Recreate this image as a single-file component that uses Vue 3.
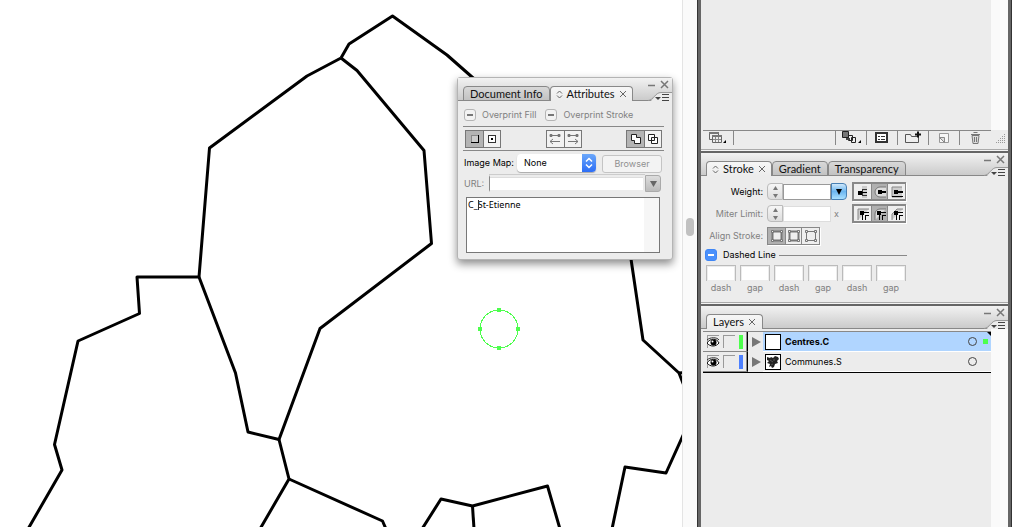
<script setup>
import { ref } from 'vue'

const borders = [
  '480,84 472,77 447,55 392.500,16 349,44 341,58',
  '341,58 307,76 209.500,148 199,277 137,277 139.500,313.500 78,341 54.500,444.500 62,470 28,529',
  '341,58 357,70.500 424,150.500 431.500,243.500 320,328.500 279,439.500 248,432 235.500,373 199,277',
  '279,439.500 289,479 260,529',
  '289,479 382.500,521 386,529',
  '628,238 631,259 643,340 679,373 686,391',
  '679,373 690,372',
  '690,420 666,473 625,467 612,529',
  '422,529 441,499 472.500,506 547.500,486 560,529',
  '472.500,506 474,529',
]
const note = ref('C_St-Etienne')
const imageMap = ref('None')
const dashes = ['dash', 'gap', 'dash', 'gap', 'dash', 'gap']
const layers = [
  { name: 'Centres.C', tone: 'green', selected: true },
  { name: 'Communes.S', tone: 'blue', selected: false },
]
</script>

<template>
  <div class="app">
    <main class="canvas">
      <svg class="map" width="100%" height="100%">
        <polyline v-for="b in borders" :key="b" :points="b" fill="none" stroke="#000" stroke-width="3" stroke-linejoin="round" />
        <g fill="#4dff4d" shape-rendering="crispEdges">
          <circle cx="499" cy="329" r="19" fill="none" stroke="#4dff4d" />
          <rect x="497" y="308" width="4" height="4" />
          <rect x="497" y="346" width="4" height="4" />
          <rect x="478" y="327" width="4" height="4" />
          <rect x="516" y="327" width="4" height="4" />
        </g>
      </svg>

      <section class="palette" aria-label="Attributes">
        <header class="head">
          <div class="tabs">
            <button class="tab off">Document Info</button>
            <button class="tab">
              <svg class="ud" width="7" height="9"><path d="M1 3.500 3.500 1 6 3.500M1 5.500 3.500 8 6 5.500" /></svg>Attributes
              <svg class="tx" width="8" height="8"><path d="M1 1l6 6M7 1l-6 6" /></svg>
            </button>
          </div>
          <svg class="corner" width="24" height="24">
            <path d="M0 24C6 23 7 15 13 15H24V24Z" fill="#ececec" /><path d="M0 22.500C6 22 7 14.500 13 14.500H24" fill="none" stroke="#999" />
            <path d="M0 7.500h7M13 3l7 7M20 3l-7 7" fill="none" stroke="#777" stroke-width="1.500" />
            <path d="M7 19h6l-3 3z" fill="#444" /><path d="M14 16.500h7M14 19.500h7M14 22.500h7" stroke="#444" />
          </svg>
        </header>
        <div class="attrs">
          <div class="over">
            <label><input type="checkbox" class="mixed" />Overprint Fill</label>
            <label><input type="checkbox" class="mixed" />Overprint Stroke</label>
          </div>
          <div class="trio">
            <div class="pair">
              <button class="on" aria-label="Hide center"><svg width="16" height="16"><path d="M4 4h8v8H4z" fill="#888" /><path d="M5 5h6v6H5z" fill="#ccc" /><path d="M11 4h1v8H4v-1h7z" /></svg></button>
              <button aria-label="Show center"><svg width="16" height="16"><rect x="4.500" y="4.500" width="7" height="7" fill="#fff" stroke="#333" /><rect x="7" y="7" width="2" height="2" /></svg></button>
            </div>
            <div class="pair">
              <button aria-label="Reverse path off"><svg width="16" height="16" fill="none" stroke="#777"><path d="M3 4.500h10M3 3.500h2v2H3zM11 3.500h2v2h-2zM3 10.500h10M6 8l-3 2.500L6 13" /></svg></button>
              <button aria-label="Reverse path on"><svg width="16" height="16" fill="none" stroke="#777"><path d="M3 4.500h10M3 3.500h2v2H3zM11 3.500h2v2h-2zM3 10.500h10M10 8l3 2.500L10 13" /></svg></button>
            </div>
            <div class="pair">
              <button class="on" aria-label="Non-zero winding"><svg width="16" height="16"><path d="M3.500 3.500h5v3h4v6h-6v-3h-3z" fill="#fff" stroke="#222" /></svg></button>
              <button aria-label="Even-odd"><svg width="16" height="16"><path d="M3.500 3.500h6v6h-6zM6.500 6.500h6v6h-6z" fill="#fff" fill-rule="evenodd" stroke="#222" /></svg></button>
            </div>
          </div>
          <div class="line imap">
            <label for="imap">Image Map:</label>
            <div class="pick">
              <select id="imap" v-model="imageMap"><option>None</option></select>
              <svg width="14" height="18"><path d="M4 7.500 7 4.500l3 3M4 10.500l3 3 3-3" fill="none" stroke="#fff" stroke-width="1.500" /></svg>
            </div>
            <button class="browser" disabled>Browser</button>
          </div>
          <div class="line url">
            <label for="url">URL:</label>
            <input id="url" type="text" disabled />
            <button aria-label="Recent URLs" disabled><svg width="7" height="6"><path d="M0 0h7L3.500 6z" fill="#666" /></svg></button>
          </div>
          <div class="note"><textarea v-model="note" aria-label="Note" spellcheck="false"></textarea><i class="caret"></i></div>
        </div>
      </section>
    </main>

    <div class="vscroll"><i></i></div>

    <aside class="dock">
      <section class="panel swatches">
        <div class="blank"><div class="track"></div></div>
        <footer class="tools">
          <button aria-label="Libraries"><svg width="22" height="16"><g fill="#eee" stroke="#666"><path d="M2.500 2.500h9v7h-9z" /><path d="M5.500 5.500h9v7h-9z" /></g><path d="M2 2h10v2H2zM5 5h10v2H5z" fill="#777" /><path d="M6 9.500h8M8.500 7v5M11.500 7v5" stroke="#888" /><path d="M19 10v3h-3z" /></svg></button>
          <span class="space"></span>
          <button aria-label="Show kinds"><svg width="22" height="16"><path d="M8.500 5.500h4v5h-4zM11.500 7.500h4v5h-4z" fill="#eee" stroke="#222" /><path d="M2.500 1.500h6v6h-6z" fill="#777" stroke="#222" /><path d="M6 8h4v2H6z" fill="#444" /><path d="M21 10v3h-3z" /></svg></button>
          <button aria-label="Options"><svg width="22" height="16"><rect x="5" y="3" width="11" height="9" fill="#fff" stroke="#333" stroke-width="2" /><path d="M7 6.500h2M10 6.500h4M7 9.500h2M10 9.500h4" stroke="#333" /></svg></button>
          <button aria-label="New group"><svg width="22" height="16"><path d="M3.500 12.500v-8h5l1 2h7v6z" fill="#eee" stroke="#555" /><path d="M13 4.500h6M16 1.500v6" stroke="#111" stroke-width="2" /></svg></button>
          <button aria-label="New"><svg width="22" height="16"><path d="M6.500 3.500h9v9h-9z" fill="#f6f6f6" stroke="#999" /><path d="M6.500 7.500h5v5z" fill="#ddd" stroke="#888" /></svg></button>
          <button aria-label="Delete"><svg width="22" height="16"><path d="M7 5.500l1 8h5l1-8z" fill="#ddd" stroke="#777" /><path d="M6 4.500h9M8.500 2.500h4M9.500 7v5M11.500 7v5" stroke="#777" /></svg></button>
          <svg class="grip" width="17" height="17" fill="#999"><path d="M13 4h1v1h-1zM11 6h1v1h-1zM13 6h1v1h-1zM9 8h1v1H9zM11 8h1v1h-1zM13 8h1v1h-1zM7 10h1v1H7zM9 10h1v1H9zM11 10h1v1h-1zM13 10h1v1h-1zM5 12h1v1H5zM7 12h1v1H7zM9 12h1v1H9zM11 12h1v1h-1zM13 12h1v1h-1z" /></svg>
        </footer>
      </section>

      <section class="panel">
        <header class="head">
          <div class="tabs">
            <button class="tab">
              <svg class="ud" width="7" height="9"><path d="M1 3.500 3.500 1 6 3.500M1 5.500 3.500 8 6 5.500" /></svg>Stroke
              <svg class="tx" width="8" height="8"><path d="M1 1l6 6M7 1l-6 6" /></svg>
            </button>
            <button class="tab off">Gradient</button>
            <button class="tab off">Transparency</button>
          </div>
          <svg class="corner" width="24" height="24">
            <path d="M0 24C6 23 7 15 13 15H24V24Z" fill="#ececec" /><path d="M0 22.500C6 22 7 14.500 13 14.500H24" fill="none" stroke="#999" />
            <path d="M0 7.500h7M13 3l7 7M20 3l-7 7" fill="none" stroke="#777" stroke-width="1.500" />
            <path d="M7 19h6l-3 3z" fill="#444" /><path d="M14 16.500h7M14 19.500h7M14 22.500h7" stroke="#444" />
          </svg>
        </header>
        <div class="stroke">
          <div class="srow">
            <label for="weight" class="strong">Weight:</label>
            <div class="spin live">
              <button class="step" aria-label="Step weight"><svg width="9" height="14"><path d="M2 5l2.500-4L7 5zM2 9l2.500 4L7 9z" fill="#777" /></svg></button>
              <input id="weight" type="text" />
              <button class="drop" aria-label="Weights"><svg width="6" height="6"><path d="M0 0h6L3 6z" /></svg></button>
            </div>
            <div class="seg">
              <button aria-label="Butt cap"><svg width="16" height="16"><path d="M7 2h5v12H7z" fill="#ccc" /><path d="M7 5h5v1H8v5h4v1H7z" fill="#333" /><path d="M3 7h4v4H3zM6 8h6v1H6z" /></svg></button>
              <button class="on" aria-label="Round cap"><svg width="16" height="16"><path d="M14 3H8a5 5 0 0 0 0 10h6" fill="#ddd" stroke="#777" /><path d="M6 6h4v4H6zM9 7h5v2H9z" /></svg></button>
              <button aria-label="Square cap"><svg width="16" height="16"><path d="M13 3H3v10h10" fill="#ccc" stroke="#888" /><path d="M5 6h4v4H5zM8 7h6v2H8zM3 12h11v1H3z" /></svg></button>
            </div>
          </div>
          <div class="srow">
            <label for="miter">Miter Limit:</label>
            <div class="spin">
              <button class="step" aria-label="Step miter limit" disabled><svg width="9" height="14"><path d="M2 5l2.500-4L7 5zM2 9l2.500 4L7 9z" fill="#777" /></svg></button>
              <input id="miter" type="text" disabled /><span>x</span>
            </div>
            <div class="seg">
              <button aria-label="Miter join"><svg width="16" height="16"><path d="M3 14V3h11" fill="#ccc" stroke="#888" /><path d="M5 5h4v4H5zM8 6h6v1H8zM7 8h1v6H7zM10 9h4v1h-3v4h-1z" /></svg></button>
              <button class="on" aria-label="Round join"><svg width="16" height="16"><path d="M3 14V8a5 5 0 0 1 5-5h6" fill="#ddd" stroke="#777" /><path d="M5 5h4v4H5zM8 6h6v1H8zM7 8h1v6H7zM10 9h4v1h-3v4h-1z" /></svg></button>
              <button aria-label="Bevel join"><svg width="16" height="16"><path d="M3 14V8l5-5h6" fill="#ccc" stroke="#888" /><path d="M5 5h4v4H5zM8 6h6v1H8zM7 8h1v6H7zM10 9h4v1h-3v4h-1z" /></svg></button>
            </div>
          </div>
          <div class="srow">
            <span class="lab">Align Stroke:</span>
            <div class="seg flat">
              <button v-for="(a, i) in ['center', 'inside', 'outside']" :key="a" :class="{ on: i === 0 }" :aria-label="'Align ' + a" disabled>
                <svg width="16" height="16" fill="#eee" stroke="#777"><path d="M3.500 3.500h9v9h-9z" :stroke-width="i < 2 ? 2 : 1" /><path d="M2.500 2.500h2v2h-2zM11.500 2.500h2v2h-2zM2.500 11.500h2v2h-2zM11.500 11.500h2v2h-2z" /></svg>
              </button>
            </div>
          </div>
          <div class="dashline"><label><input type="checkbox" class="mixed blue" />Dashed Line</label><hr /></div>
          <div class="dashes">
            <label v-for="(d, i) in dashes" :key="i"><input type="text" disabled />{{ d }}</label>
          </div>
        </div>
      </section>

      <section class="panel layers">
        <header class="head">
          <div class="tabs">
            <button class="tab off-mark">Layers
              <svg class="tx" width="8" height="8"><path d="M1 1l6 6M7 1l-6 6" /></svg>
            </button>
          </div>
          <svg class="corner" width="24" height="24">
            <path d="M0 24C6 23 7 15 13 15H24V24Z" fill="#ececec" /><path d="M0 22.500C6 22 7 14.500 13 14.500H24" fill="none" stroke="#999" />
            <path d="M0 7.500h7M13 3l7 7M20 3l-7 7" fill="none" stroke="#777" stroke-width="1.500" />
            <path d="M7 19h6l-3 3z" fill="#444" /><path d="M14 16.500h7M14 19.500h7M14 22.500h7" stroke="#444" />
          </svg>
        </header>
        <div class="lbody">
          <ul class="list">
            <li v-for="l in layers" :key="l.name" :class="{ sel: l.selected }">
              <div class="flags">
                <button class="well" :aria-label="'Visibility ' + l.name"><svg width="13" height="13"><path d="M0 7C3 2 10 2 12 7 9 11 3 11 0 7z" fill="#fff" stroke="#111" /><circle cx="6.500" cy="6.500" r="3" /><circle cx="5.500" cy="5.500" r="1" fill="#fff" /><path d="M0 4C3 1 10 1 12 4" fill="none" stroke="#333" /></svg></button>
                <button class="well" :aria-label="'Lock ' + l.name"></button>
                <i :class="l.tone"></i>
              </div>
              <svg class="tri" width="15" height="19"><path d="M4 5v10l9-5z" fill="#777" /></svg>
              <div class="entry">
                <svg class="thumb" width="16" height="16"><rect x="0.500" y="0.500" width="15" height="15" fill="#fff" stroke="#000" /><path v-if="!l.selected" d="M2 3l3 1 1-1 2 1 2-2 3 1 1 2-2 2 1 2-3 1-1 3-2 1-1-2-2 1 1-3-3-1 2-2-2-1z" fill="#222" /><path v-if="!l.selected" d="M5 6l3 2M9 5v2M6 11l2-1" stroke="#555" /></svg>
                <span class="name">{{ l.name }}</span>
                <svg class="target" width="27" height="19"><circle cx="8.500" cy="9.500" r="4" fill="none" stroke="#444" /><template v-if="l.selected"><path d="M19 7h5v5h-5z" fill="#4dff4d" /><path d="M23 0h4v4z" /></template></svg>
              </div>
            </li>
          </ul>
          <div class="track"></div>
        </div>
      </section>
    </aside>
  </div>
</template>

<style>
body { margin: 0; overflow: hidden; }
</style>

<style scoped>
* { box-sizing: border-box; }
button, input, select, textarea { font: inherit; color: inherit; margin: 0; padding: 0; border: 0; border-radius: 0; background: none; appearance: none; outline: 0; }
button { display: flex; align-items: center; justify-content: center; }
svg { display: block; flex: none; }
.app { display: flex; height: 100vh; background: #fff; font: 9px/12px Inter, "Liberation Sans", sans-serif; color: #000; }
.canvas { position: relative; flex: 1; min-width: 0; overflow: hidden; }
.map { position: absolute; inset: 0; }

.palette { position: absolute; left: 457px; top: 77px; width: 216px; background: #ececec; border: 1px solid #b4b4b4; border-radius: 3px; box-shadow: 0 4px 8px rgba(0, 0, 0, .45); }
.head { display: flex; align-items: flex-end; justify-content: space-between; height: 23px; background: linear-gradient(#f2f2f2, #c9c9c9); box-shadow: inset 0 -1px #888; padding-left: 5px; }
.tabs { display: flex; align-items: flex-end; }
.tab { height: 15px; padding: 0 5px; gap: 4px; font: 11px/14px Lato, "Noto Sans", sans-serif; white-space: nowrap; border: 1px solid #888; border-bottom: 0; border-radius: 4px 4px 0 0; background: linear-gradient(#f6f6f6, #ececec); color: #111; }
.tab.off { padding: 0 6px; border-bottom: 1px solid #888; background: linear-gradient(#d8d8d8, #c2c2c2); }
.tab.off-mark { padding: 0 6px; }
.ud, .tx { fill: none; stroke: #666; }
.corner { margin-bottom: -1px; }

.attrs { padding: 8px 8px 6px 5px; }
.over { display: flex; gap: 9px; color: #808080; padding: 0 0 5px 1px; border-bottom: 1px solid #888; }
.over label { display: flex; align-items: center; gap: 6px; white-space: nowrap; }
.mixed { width: 12px; height: 12px; border: 1px solid #b5b5b5; border-radius: 3px; background: linear-gradient(#777, #777) center / 6px 2px no-repeat #f2f2f2; }
.mixed.blue { border-color: #3f86f5; background: linear-gradient(#fff, #fff) center / 6px 2px no-repeat #4a90fb; }
.trio { display: flex; justify-content: space-between; padding: 3px 2px 2px; border-bottom: 1px solid #888; }
.pair { display: flex; border: 1px solid #777; }
.pair button { width: 17px; height: 16px; background: #f2f2f2; }
.pair button + button { border-left: 1px solid #777; }
.pair .on { background: #b4b4b4; }
.line { display: flex; align-items: center; }
.imap { padding: 1px 2px 0 1px; gap: 3px; }
.imap label { width: 50px; white-space: nowrap; }
.pick { display: flex; width: 79px; height: 18px; background: #fff; border-radius: 4px; overflow: hidden; box-shadow: 0 1px 1px #aaa; }
.pick select { flex: 1; min-width: 0; padding-left: 7px; }
.pick svg { background: linear-gradient(#6aa7fa, #2d6ef6); }
.browser { height: 18px; flex: 1; margin: 3px 0 0 3px; border: 1px solid #c4c4c4; border-radius: 3px; background: #f3f3f3; color: #909090; }
.url { padding: 2px 3px 0 1px; color: #808080; }
.url label { width: 25px; }
.url input { flex: 1; min-width: 0; height: 17px; background: #fff; border: 2px solid #ececec; border-left: 1px solid #888; box-shadow: inset 0 1px #ddd, 0 -1px #ccc; }
.url button { width: 16px; height: 17px; border: 1px solid #aaa; background: linear-gradient(#ddd, #bbb); border-radius: 0 3px 3px 0; }
.note { position: relative; margin: 5px 4px 0 3px; height: 56px; display: flex; background: linear-gradient(#f6f6f6, #f6f6f6) right / 15px 100% no-repeat #fff; border: 1px solid #777; }
.note textarea { flex: 1; resize: none; overflow: hidden; padding: 1px; font: 9px/12px "Noto Sans", sans-serif; }
.caret { position: absolute; left: 11px; top: 2px; width: 1px; height: 10px; background: #333; }

.vscroll { width: 15px; background: #fafafa; border-left: 1px solid #e4e4e4; display: flex; align-items: center; justify-content: center; padding-bottom: 74px; }
.vscroll i { width: 8px; height: 18px; border-radius: 4px; background: #c1c1c1; }

.dock { width: 315px; display: flex; flex-direction: column; gap: 2px; padding: 0 3px; background: #666; border: solid #333; border-width: 0 1px; }
.panel { background: #ececec; border-bottom: 1px solid #f4f4f4; box-shadow: inset 0 -1px #aaa; }
.blank { height: 130px; display: flex; justify-content: flex-end; }
.track { width: 17px; background: #fafafa; }
.tools { display: flex; height: 20px; margin-left: 2px; }
.tools button { width: 31px; height: 15px; border-right: 1px solid #888; border-top: 1px solid #888; }
.tools button:nth-last-of-type(1) { border-right: 0; }
.tools .space { flex: 1; border: solid #888; border-width: 1px 1px 0 0; height: 15px; }

.stroke { padding: 6px 4px 9px; color: #808080; }
.srow { display: flex; align-items: center; margin-bottom: 3px; height: 19px; }
.srow label, .lab { width: 58px; text-align: right; white-space: nowrap; }
.strong { color: #000; }
.spin { display: flex; align-items: center; width: 80px; height: 17px; margin: 0 5px 0 4px; }
.step { width: 16px; height: 17px; border: 1px solid #bbb; border-radius: 4px 0 0 4px; background: linear-gradient(#f6f6f6, #ddd); }
.spin input { width: 48px; height: 16px; background: #fff; border: 1px solid #ddd; }
.spin.live input { border-color: #999; }
.spin span { margin-left: 3px; }
.drop { width: 16px; height: 17px; border: 1px solid #4880b4; border-radius: 0 4px 4px 0; background: linear-gradient(#cfe8fb, #6cb6f0, #a9e0ff); }
.seg { display: flex; border: 2px solid #888; border-right-width: 1px; box-shadow: 1px 1px #fff; }
.seg button { width: 17px; height: 15px; background: #eee; }
.seg button:nth-child(2) { border: solid #888; border-width: 0 1px; }
.seg .on { background: #b0b0b0; }
.seg.flat { border-width: 1px; margin-left: 4px; }
.seg.flat button { height: 16px; }
.dashline { display: flex; align-items: center; gap: 3px; color: #000; margin-top: 4px; }
.dashline label { display: flex; align-items: center; gap: 6px; }
.dashline hr { width: 128px; margin: 0; border: 0; border-top: 1px solid #888; }
.dashes { display: flex; gap: 4px; margin: 4px 0 0 1px; }
.dashes label { width: 30px; text-align: center; }
.dashes input { display: block; width: 30px; height: 16px; margin-bottom: 1px; padding: 1px; background: #fff content-box; border: 1px solid #bbb; border-bottom: 0; }

.layers { flex: 1; display: flex; flex-direction: column; box-shadow: none; border: 0; }
.lbody { flex: 1; display: flex; }
.list { flex: 1; margin: 2px 0 auto 2px; padding: 0; list-style: none; border-top: 1px solid #888; border-bottom: 1px solid #000; }
.list li { display: flex; height: 20px; }
.flags { display: flex; align-items: center; gap: 4px; width: 45px; padding-left: 4px; border-right: 1px solid #000; border-bottom: 1px solid #888; box-shadow: inset -1px 0 #888; }
.well { width: 12px; height: 13px; border: solid #999; border-width: 1px 0 0 1px; }
.flags i { width: 4px; height: 14px; }
.flags .green { background: #4dff4d; }
.flags .blue { background: #4d80ff; }
.entry { flex: 1; display: flex; align-items: center; gap: 4px; padding-left: 2px; border-bottom: 1px solid #fff; line-height: 10px; }
.sel .entry { background: #b0d5ff; font-weight: 700; }
.name { flex: 1; }
</style>
